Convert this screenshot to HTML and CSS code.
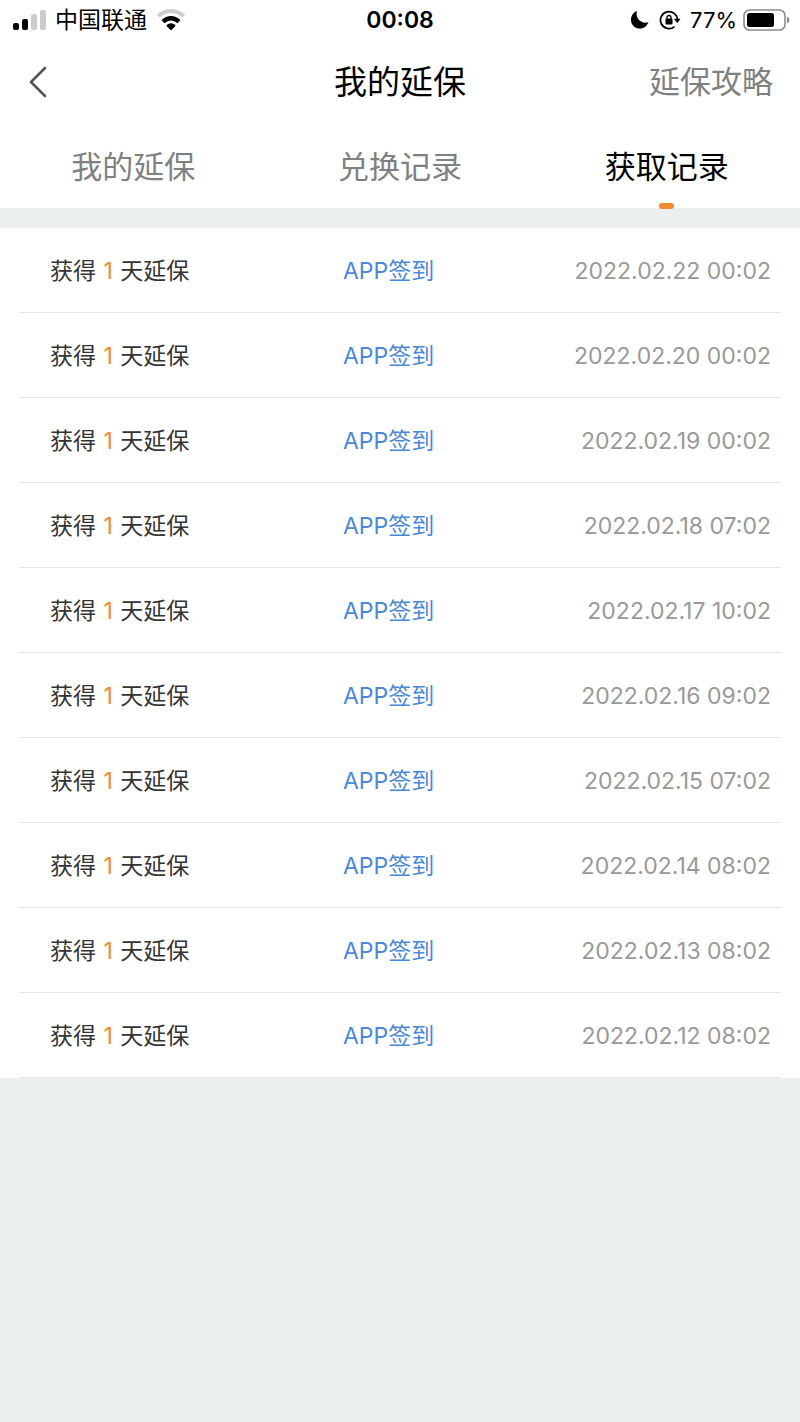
FILE: index.html
```
<!DOCTYPE html>
<html lang="zh-CN">
<head>
<meta charset="utf-8">
<meta name="viewport" content="width=device-width, initial-scale=1">
<title>我的延保</title>
<link rel="stylesheet" href="styles.css">
</head>

<body>
<div class="status">
	<div class="status_l">
		<svg width="34" height="22" viewBox="0 0 34 22">
			<rect x="0" y="14" width="6" height="7" rx="2"/>
			<rect x="9" y="10" width="6" height="11" rx="2"/>
			<rect x="18" y="5" width="6" height="16" rx="2" fill="#ccc"/>
			<rect x="27" y="1" width="6" height="20" rx="2" fill="#ccc"/>
		</svg>
		<span class="carrier">中国联通</span>
		<svg width="28" height="22" viewBox="0 0 28 22">
			<path d="M0 5.500Q6 0 14 0T28 5.500L25.500 8.500Q20 4 14 4T2.500 8.500Z" fill="#ccc"/>
			<path d="M4.500 11Q9 7 14 7T23.500 11L20.500 14.200Q17.500 11.500 14 11.500T7.500 14.200Z"/>
			<path d="M9.500 16Q14 12.500 18.500 16L18 17.500L14.800 20.700Q14 21.300 13.200 20.700L10 17.500Z"/>
		</svg>
	</div>
	<div class="clock">00:08</div>
	<div class="status_r">
		<svg width="20" height="20" viewBox="0 0 20 20">
			<path d="M7 1C5 7.500 10.500 14.500 18.500 12.200C16.500 17 12.500 19 9 18.600C4.500 18.300 1 14.500 1 10C1 5.500 3.500 2.200 7 1Z"/>
		</svg>
		<svg width="22" height="20" viewBox="0 0 22 20">
			<path d="M15.500 16.600A8.500 8.500 0 1 1 18.500 10" fill="none" stroke="#000" stroke-width="1.700"/>
			<path d="M15 8.800H21.500L18.300 13.200Z"/>
			<rect x="6.500" y="8.500" width="7" height="6" rx="1"/>
			<path d="M8 9V7.500A2 2 0 0 1 12 7.500V9" fill="none" stroke="#000" stroke-width="1.300"/>
		</svg>
		<span class="percent">77%</span>
		<svg width="48" height="22" viewBox="0 0 48 22">
			<rect x="2" y="1" width="41" height="20" rx="5.500" fill="none" stroke="#8c8c8c" stroke-width="1.600"/>
			<rect x="5" y="4" width="27" height="14" rx="2.500"/>
			<path d="M45 7.500Q47.500 8.500 47.500 11T45 14.500Z" fill="#8c8c8c"/>
		</svg>
	</div>
</div>

<div class="nav">
	<button class="back" type="button" aria-label="返回">
		<svg width="18" height="32" viewBox="0 0 18 32">
			<path d="M16 2L2 16L16 30" fill="none" stroke="#555" stroke-width="2.600" stroke-linecap="round" stroke-linejoin="round"/>
		</svg>
	</button>
	<h1>我的延保</h1>
	<a class="guide" href="#">延保攻略</a>
</div>

<div class="tabs">
	<a href="#">我的延保</a>
	<a href="#">兑换记录</a>
	<a href="#" class="active">获取记录</a>
</div>

<div class="list">
	<table>
		<tr><td class="get">获得 <em>1</em> 天延保</td><td class="from">APP签到</td><td class="time">2022.02.22 00:02</td></tr>
		<tr><td class="get">获得 <em>1</em> 天延保</td><td class="from">APP签到</td><td class="time">2022.02.20 00:02</td></tr>
		<tr><td class="get">获得 <em>1</em> 天延保</td><td class="from">APP签到</td><td class="time">2022.02.19 00:02</td></tr>
		<tr><td class="get">获得 <em>1</em> 天延保</td><td class="from">APP签到</td><td class="time">2022.02.18 07:02</td></tr>
		<tr><td class="get">获得 <em>1</em> 天延保</td><td class="from">APP签到</td><td class="time">2022.02.17 10:02</td></tr>
		<tr><td class="get">获得 <em>1</em> 天延保</td><td class="from">APP签到</td><td class="time">2022.02.16 09:02</td></tr>
		<tr><td class="get">获得 <em>1</em> 天延保</td><td class="from">APP签到</td><td class="time">2022.02.15 07:02</td></tr>
		<tr><td class="get">获得 <em>1</em> 天延保</td><td class="from">APP签到</td><td class="time">2022.02.14 08:02</td></tr>
		<tr><td class="get">获得 <em>1</em> 天延保</td><td class="from">APP签到</td><td class="time">2022.02.13 08:02</td></tr>
		<tr><td class="get">获得 <em>1</em> 天延保</td><td class="from">APP签到</td><td class="time">2022.02.12 08:02</td></tr>
	</table>
</div>
</body>
</html>
```
FILE: styles.css
```
* {padding:0; margin:0; box-sizing:border-box;}
body {background:#ebeff0; color:#000; font-family:Inter,"Noto Sans CJK SC",sans-serif;}
a {text-decoration:none;}
svg {display:block; flex:none;}

.status {display:grid; grid-template-columns:1fr auto 1fr; align-items:center; height:40px; padding:0 10px; background:#fff; font-size:23px; line-height:32px;}
.status_l, .status_r {display:flex; align-items:center;}
.status_l {gap:8px; padding-left:3px;}
.status_l .carrier {margin-right:2px;}
.status_r {justify-content:flex-end; gap:9px;}
.status_r .percent {margin-right:-4px; font-size:22px;}
.clock {font-weight:600;}

.nav {display:grid; grid-template-columns:1fr auto 1fr; align-items:center; height:84px; padding:0 27px; background:#fff;}
.nav h1 {font-size:33px; line-height:48px; font-weight:400;}
.back {justify-self:start; padding:0 2px; border:0; background:none; cursor:pointer;}
.guide {justify-self:end; color:#808080; font-size:31px; line-height:48px;}

.tabs {display:flex; height:84px; background:#fff; margin-bottom:20px;}
.tabs a {position:relative; flex:1; padding-top:2px; color:#808080; font-size:31px; line-height:82px; text-align:center;}
.tabs .active {color:#000;}
.tabs .active:after {content:""; position:absolute; left:50%; bottom:-1px; width:15px; height:6px; margin-left:-8px; border-radius:3px; background:#ee8a30;}

.list {padding:0 19px; background:#fff;}
.list table {width:100%; table-layout:fixed; border-collapse:separate; border-spacing:0;}
.list td {height:85px; padding-top:2px; border-bottom:1px solid #e5e5e5; font-size:23px; line-height:32px; white-space:nowrap;}
.list .get {width:36%; padding-left:31px; color:#333;}
.list .get em {margin:0 1px; color:#ee8a30; font-style:normal;}
.list .from {width:25%; text-align:center; color:#4b88d8;}
.list .time {padding-right:10px; text-align:right; color:#999;}
```
